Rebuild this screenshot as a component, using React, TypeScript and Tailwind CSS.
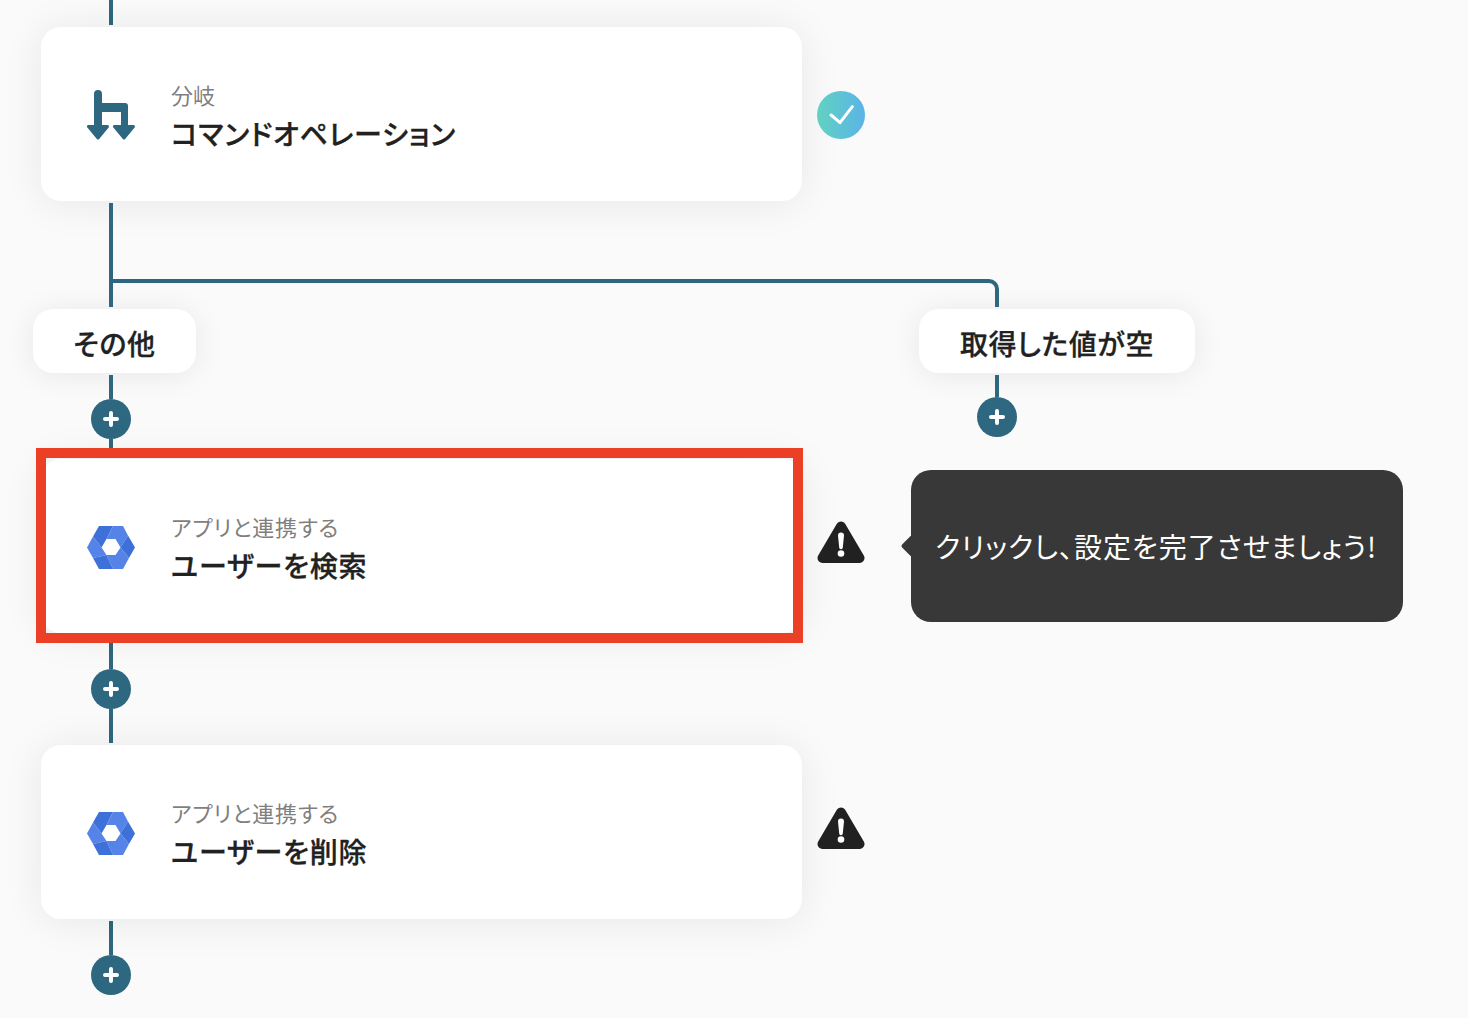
import type { ReactNode } from 'react';

const lineColor = 'bg-[#2d6780]';

function Plus({ className = '' }: { className?: string }) {
  return (
    <div className={`flex h-10 w-10 items-center justify-center rounded-full ${lineColor} ${className}`}>
      <svg width="16" height="16" viewBox="0 0 16 16">
        <path d="M8 2v12M2 8h12" stroke="#fff" strokeWidth="4" strokeLinecap="round" />
      </svg>
    </div>
  );
}

function BranchIcon() {
  return (
    <svg width="48" height="50" viewBox="0 0 48 50" fill="#2d6780" className="mt-[2px]">
      <path d="M7 4a4 4 0 0 1 8 0v9h23a3 3 0 0 1 3 3v22h-7V22H15v16H7z" />
      <path d="M1.5 36.5h19L11 48zM27.5 36.5h19L37 48z" stroke="#2d6780" strokeWidth="3" strokeLinejoin="round" />
    </svg>
  );
}

function HexIcon() {
  return (
    <svg width="48" height="44" viewBox="0 0 48 44" className="mt-[3px]">
      <path d="M0 21.5 6 10.5 14.5 21.5 19.5 29 6 32z" fill="#5583e8" />
      <path d="M6 10.5 12 0H26L19.5 13 14.5 21.5z" fill="#3d70d9" />
      <path d="M26 0H36L41 9.5 33.5 21.5 28.5 13H19.5z" fill="#5583e8" />
      <path d="M41 9.5 48 21.5 42 32 33.5 21.5z" fill="#3d70d9" />
      <path d="M33.5 21.5 42 32 36 43H26L19.5 29H28.5z" fill="#5583e8" />
      <path d="M6 32 19.5 29 26 43H12z" fill="#3d70d9" />
    </svg>
  );
}

function WarnIcon() {
  return (
    <svg width="48" height="44" viewBox="0 0 48 44" className="mb-[9px]">
      <path d="M24 6.5 42.5 38H5.5z" fill="#212121" stroke="#212121" strokeWidth="10" strokeLinejoin="round" />
      <path d="M21 15.5a3 3 0 0 1 6 0l-1.2 12a1.8 1.8 0 0 1-3.6 0z" fill="#fff" />
      <circle cx="24" cy="33.5" r="3.3" fill="#fff" />
    </svg>
  );
}

function CheckBadge() {
  return (
    <div className="mt-[2px] flex h-12 w-12 items-center justify-center rounded-full bg-gradient-to-r from-[#62d2c1] to-[#5bb3e6]">
      <svg width="26" height="22" viewBox="0 0 26 22" fill="none">
        <path d="M3 11 12 18.7 24.3 2.7" stroke="#fff" strokeWidth="3" strokeLinecap="round" strokeLinejoin="round" />
      </svg>
    </div>
  );
}

function Card({ icon, label, title, labelClass = '', titleClass = '' }: { icon: ReactNode; label: string; title: string; labelClass?: string; titleClass?: string }) {
  return (
    <div className="flex h-[174px] w-[761px] items-center gap-9 rounded-[20px] bg-white pl-[46px] shadow-[0_2px_40px_rgba(0,0,0,0.08)]">
      <div className="flex w-12 justify-center">{icon}</div>
      <div className="flex flex-col">
        <span className={`text-[22px] leading-[39px] text-[#7f7f7f] ${labelClass}`}>{label}</span>
        <span className={`text-[28px] leading-[39px] font-medium text-[#212121] [-webkit-text-stroke:0.3px_#212121] ${titleClass}`}>{title}</span>
      </div>
    </div>
  );
}

function Branch({ label, className, pillClass, lineClass }: { label: string; className: string; pillClass: string; lineClass: string }) {
  return (
    <div className={`flex flex-col ${className}`}>
      <div className={`flex h-16 items-center justify-center rounded-[20px] bg-white pt-[3px] text-[28px] font-medium tracking-[0.6px] text-[#212121] shadow-[0_2px_30px_rgba(0,0,0,0.08)] [-webkit-text-stroke:0.3px_#212121] ${pillClass}`}>
        {label}
      </div>
      <div className={`mt-[2px] ml-[76px] w-1 ${lineColor} ${lineClass}`} />
      <Plus className="ml-[58px]" />
    </div>
  );
}

export default function App() {
  return (
    <div className="h-[1018px] overflow-hidden bg-[#fafafa] pl-[41px] font-['Noto_Sans_CJK_JP','Noto_Sans',sans-serif] [font-feature-settings:'palt']">
      <div className={`ml-[68px] h-[25px] w-1 ${lineColor}`} />

      <div className="mt-[2px] flex items-center gap-[15px]">
        <Card icon={<BranchIcon />} label="分岐" title="コマンドオペレーション" titleClass="tracking-[0.8px]" />
        <CheckBadge />
      </div>

      {/* branch area */}
      <div className="relative mt-[2px] flex h-[256px]">
        <div className={`absolute top-0 left-[68px] h-[104px] w-1 ${lineColor}`} />
        <div className="absolute top-[76px] left-[72px] h-[28px] w-[886px] rounded-tr-[10px] border-t-4 border-r-4 border-[#2d6780]" />
        <Branch label="その他" className="-ml-2 w-[886px] pt-[106px]" pillClass="w-[163px]" lineClass="h-6" />
        <Branch label="取得した値が空" className="pt-[106px]" pillClass="w-[276px]" lineClass="h-[22px]" />
        <div className={`absolute top-[236px] left-[68px] h-[9px] w-1 ${lineColor}`} />
      </div>

      <div className="relative flex items-center gap-[15px]">
        <Card icon={<HexIcon />} label="アプリと連携する" title="ユーザーを検索" labelClass="tracking-[0.8px]" titleClass="tracking-[0.8px]" />
        <WarnIcon />
        <div className="absolute top-[-11px] left-[-5px] h-[195px] w-[767px] border-[10px] border-[#eb4026]" />
        <div className="absolute top-[11px] left-[870px] flex h-[152px] w-[492px] items-center rounded-[20px] bg-[#383838] pl-[24px] text-[28px] tracking-[1px] text-white">
          <div className="absolute top-[68px] left-[-7px] h-4 w-4 rotate-45 rounded-[2px] bg-[#383838]" />
          クリックし、設定を完了させましょう!
        </div>
      </div>

      <div className={`mt-[2px] ml-[68px] h-[34px] w-1 ${lineColor}`} />
      <Plus className="ml-[50px]" />
      <div className={`ml-[68px] h-[34px] w-1 ${lineColor}`} />

      <div className="mt-[2px] flex items-center gap-[15px]">
        <Card icon={<HexIcon />} label="アプリと連携する" title="ユーザーを削除" labelClass="tracking-[0.8px]" titleClass="tracking-[0.8px]" />
        <WarnIcon />
      </div>

      <div className={`mt-[2px] ml-[68px] h-[34px] w-1 ${lineColor}`} />
      <Plus className="ml-[50px]" />
    </div>
  );
}
